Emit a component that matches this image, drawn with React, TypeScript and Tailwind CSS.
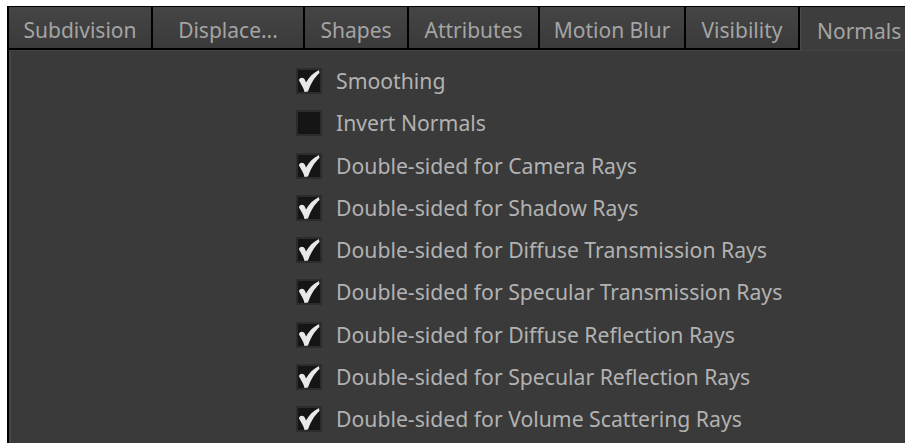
import React from "react";

const tabs = [
  { label: "Subdivision", w: "w-[144px]" },
  { label: "Displace...", w: "w-[152px]" },
  { label: "Shapes", w: "w-[104px]" },
  { label: "Attributes", w: "w-[131px]" },
  { label: "Motion Blur", w: "w-[146px]" },
  { label: "Visibility", w: "w-[114px]" },
];

const options = [
  { label: "Smoothing", on: true },
  { label: "Invert Normals", on: false },
  { label: "Double-sided for Camera Rays", on: true },
  { label: "Double-sided for Shadow Rays", on: true },
  { label: "Double-sided for Diffuse Transmission Rays", on: true },
  { label: "Double-sided for Specular Transmission Rays", on: true },
  { label: "Double-sided for Diffuse Reflection Rays", on: true },
  { label: "Double-sided for Specular Reflection Rays", on: true },
  { label: "Double-sided for Volume Scattering Rays", on: true },
];

// chunky tick with a rounded heel, like the houdini toggle
const Tick = () => (
  <svg viewBox="0 0 26 26" className="absolute -inset-[2px] w-[26px] h-[26px]">
    <path
      d="M3 12.5 C3 9.5 7.5 8.5 9 12 L10 14.5 C13 9 17 5 23 2 L23.5 5 C19 9 15 15 12 23.5 L8.5 24 C7.5 19.5 5 16 3 12.5 Z"
      fill="#e8e8e8"
    />
  </svg>
);

const Checkbox = ({ on }: { on: boolean }) => (
  <div className="relative w-[26px] h-[26px] shrink-0 border-2 border-[#2c2c2c] bg-[#151515]">
    {on && <Tick />}
  </div>
);

export default function App() {
  return (
    <div className="w-[905px] h-[443px] bg-white pt-[6px] pl-[7px] overflow-hidden font-['Noto_Sans',sans-serif]">
      <div className="h-full border-l-2 border-t border-black flex flex-col bg-[#3a3a3a]">
        <div className="flex h-[43px] shrink-0">
          {tabs.map((t) => (
            <div
              key={t.label}
              className={`${t.w} shrink-0 flex items-center justify-center pt-[7px] border-r-2 border-b-2 border-black bg-gradient-to-b from-[#454545] to-[#3a3a3a] text-[#a4a4a4] text-[21px] whitespace-nowrap`}
            >
              {t.label}
            </div>
          ))}
          <div className="flex-1 flex items-center pt-[7px] pl-[16px] bg-[#3d3d3d] border-l border-[#4a4a4a] text-[#a4a4a4] text-[21px]">
            Normals
          </div>
        </div>
        <div className="flex-1 border-t border-[#444] border-l-2 border-l-[#454545] pt-[9px] pl-[285px]">
          {options.map((o) => (
            <div key={o.label} className="flex items-center h-[42.25px]">
              <Checkbox on={o.on} />
              <span className="ml-[14px] text-[21.2px] text-[#b2b2b2] whitespace-nowrap">
                {o.label}
              </span>
            </div>
          ))}
        </div>
      </div>
    </div>
  );
}
